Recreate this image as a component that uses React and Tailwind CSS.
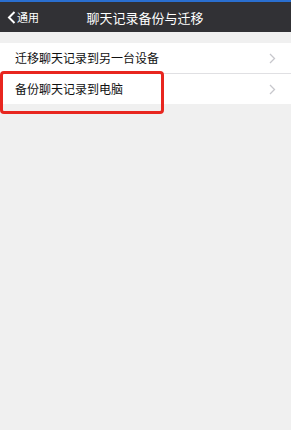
export default function App() {
  const font = { fontFamily: '"Noto Sans CJK SC", "Liberation Sans", sans-serif' };
  const rows = ["迁移聊天记录到另一台设备", "备份聊天记录到电脑"];

  return (
    <div className="w-[291px] h-[430px] bg-[#f0f0f0] overflow-hidden" style={font}>
      <div className="h-[2px] bg-[#2a6fd0]" />
      <div className="relative h-[30px] bg-[#313135] flex items-center justify-center">
        <div className="absolute left-[7px] top-0 h-full flex items-center text-white">
          <svg width="9" height="13" viewBox="0 0 9 13" fill="none">
            <path d="M7.5 1 L2 6.5 L7.5 12" stroke="white" strokeWidth="2" />
          </svg>
          <span className="ml-[1px] text-[11px] leading-none">通用</span>
        </div>
        <span className="text-white text-[13px] leading-none ml-[-1px]">聊天记录备份与迁移</span>
      </div>
      <div className="mt-[11px] bg-white">
        {rows.map((t, i) => (
          <div key={t} className="relative">
            <div className="h-[30px] flex items-center justify-between pl-[15px] pr-[15px]">
              <span className="text-[12px] text-[#111] leading-none">{t}</span>
              <svg width="7" height="11" viewBox="0 0 7 11" fill="none">
                <path d="M1 1 L5.5 5.5 L1 10" stroke="#c7c7cc" strokeWidth="1.3" />
              </svg>
            </div>
            {i === 0 && <div className="ml-[15px] h-px bg-[#e0e0e3]" />}
            {i === 1 && (
              <div className="absolute left-[0px] top-[-3px] w-[164px] h-[43px] border-[3px] border-[#e8261f] rounded-[4px]" />
            )}
          </div>
        ))}
      </div>
    </div>
  );
}
